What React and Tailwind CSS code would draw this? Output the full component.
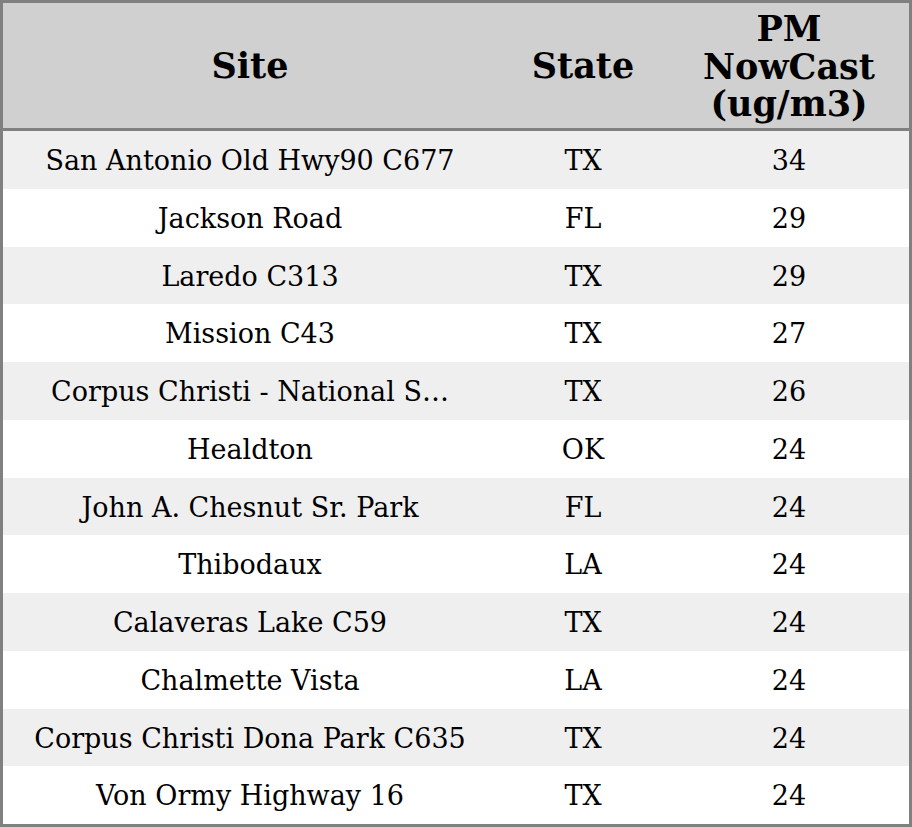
import React from "react";

const rows = [
  ["San Antonio Old Hwy90 C677", "TX", "34"],
  ["Jackson Road", "FL", "29"],
  ["Laredo C313", "TX", "29"],
  ["Mission C43", "TX", "27"],
  ["Corpus Christi - National S…", "TX", "26"],
  ["Healdton", "OK", "24"],
  ["John A. Chesnut Sr. Park", "FL", "24"],
  ["Thibodaux", "LA", "24"],
  ["Calaveras Lake C59", "TX", "24"],
  ["Chalmette Vista", "LA", "24"],
  ["Corpus Christi Dona Park C635", "TX", "24"],
  ["Von Ormy Highway 16", "TX", "24"],
];

export default function App() {
  return (
    <div
      className="w-[912px] h-[827px] border-[3px] border-[#808080] bg-white text-black flex flex-col"
      style={{ fontFamily: '"DejaVu Serif", serif' }}
    >
      <div className="grid grid-cols-[494px_172px_240px] h-[128px] shrink-0 bg-[#d0d0d0] border-b-[3px] border-[#808080] font-bold text-[35px] leading-[37.5px]">
        <div className="flex items-center justify-center text-center">Site</div>
        <div className="flex items-center justify-center text-center">State</div>
        <div className="flex items-center justify-center text-center pt-[2px]">
          PM
          <br />
          NowCast
          <br />
          (ug/m3)
        </div>
      </div>
      <div className="flex flex-col flex-1">
        {rows.map((r, i) => (
          <div
            key={i}
            className={`grid grid-cols-[494px_172px_240px] flex-1 text-[27px] pt-[3px] ${
              i % 2 === 0 ? "bg-[#efefef]" : "bg-white"
            }`}
          >
            <div className="flex items-center justify-center whitespace-nowrap">{r[0]}</div>
            <div className="flex items-center justify-center">{r[1]}</div>
            <div className="flex items-center justify-center">{r[2]}</div>
          </div>
        ))}
      </div>
    </div>
  );
}
